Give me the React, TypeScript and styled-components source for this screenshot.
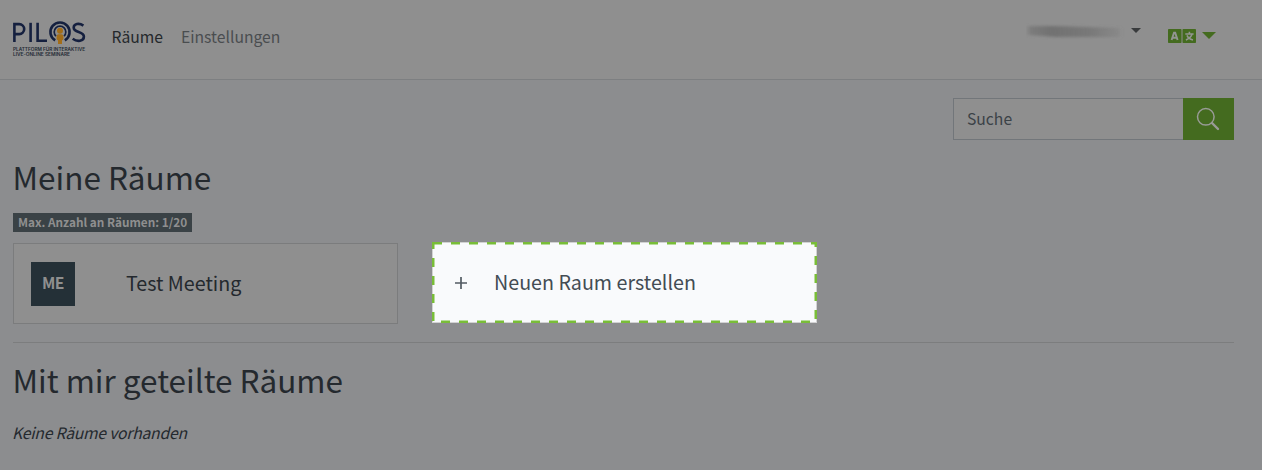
import React from 'react';
import styled, { createGlobalStyle } from 'styled-components';

const GlobalStyle = createGlobalStyle`
  *, *::before, *::after { box-sizing: border-box; }
  body {
    margin: 0;
    background: #8c8d8f;
    color: #24292e;
    font-family: 'Noto Sans CJK SC', 'Noto Sans', sans-serif;
    font-size: 15.7px;
    line-height: 24px;
  }
`;

const Page = styled.div`
  height: 470px;
  overflow: hidden;
`;

const Navbar = styled.header`
  display: flex;
  align-items: flex-start;
  height: 80px;
  padding: 0 46px 0 12px;
  background: #8f8f8f;
  border-bottom: 1px solid #7d7f81;
`;

const Logo = styled.svg`
  width: 75px;
  height: 40px;
  margin-top: 19px;
  flex: none;
`;

const NavLinks = styled.nav`
  display: flex;
  gap: 18px;
  margin: 25px auto 0 24.5px;
`;

const NavLink = styled.a<{ $active?: boolean }>`
  color: ${({ $active }) => ($active ? '#24282b' : '#4a4d4f')};
  white-space: nowrap;
`;

const UserMenu = styled.div`
  display: flex;
  align-items: flex-start;
  margin-right: 27px;
`;

const HiddenName = styled.svg`
  width: 100px;
  height: 22px;
  margin: 20px 5px 0 0;
`;

const Caret = styled.span<{ $color: string; $size: number; $top: number }>`
  border: ${({ $size }) => $size}px solid transparent;
  border-top-color: ${({ $color }) => $color};
  border-bottom: 0;
  margin-top: ${({ $top }) => $top}px;
`;

const LanguageMenu = styled.div`
  display: flex;
  align-items: flex-start;
  gap: 6px;
`;

const LanguageIcon = styled.svg`
  width: 28px;
  height: 14px;
  margin-top: 29px;
`;

const Content = styled.main`
  padding: 18px 28px 0 13px;
`;

const SearchBar = styled.form`
  display: flex;
  width: 281px;
  height: 42px;
  margin-left: auto;
`;

const SearchInput = styled.input`
  flex: 1;
  min-width: 0;
  padding: 0 13px;
  border: 1px solid #72767a;
  border-right: 0;
  border-radius: 0;
  background: #8f8f8f;
  font: inherit;
  color: #3b4247;
  outline: 0;
  &::placeholder { color: #3b4247; opacity: 1; }
`;

const SearchButton = styled.button`
  display: flex;
  align-items: center;
  justify-content: center;
  width: 51px;
  padding: 0 2px 0 0;
  border: 0;
  background: #446b1f;
`;

const Heading = styled.h2`
  margin: 15px 0 0 -0.5px;
  font-size: 31.5px;
  font-weight: 400;
  line-height: 42px;
  white-space: nowrap;
`;

const LimitBadge = styled.div`
  width: 179px;
  height: 19px;
  margin-top: 16px;
  padding-left: 5px;
  background: #3a4246;
  color: #8f8f8f;
  font-size: 11.8px;
  font-weight: 700;
  line-height: 18px;
  white-space: nowrap;
`;

const RoomGrid = styled.div`
  display: grid;
  grid-template-columns: 385px 385px;
  gap: 34px;
  height: 82px;
  margin-top: 10px;
`;

const RoomCard = styled.article`
  display: flex;
  align-items: center;
  height: 81px;
  margin-top: 1px;
  padding-left: 17px;
  border: 1px solid #7b7c7d;
  background: #8f8f8f;
`;

const RoomInitials = styled.div`
  width: 44px;
  height: 44px;
  margin-right: 51px;
  background: #243037;
  color: #8f8f8f;
  font-size: 15.7px;
  font-weight: 700;
  letter-spacing: -0.5px;
  line-height: 42px;
  text-align: center;
`;

const RoomName = styled.h3`
  margin: 0 0 2px;
  color: inherit;
  font-size: 19.7px;
  font-weight: 400;
  line-height: 28px;
  white-space: nowrap;
`;

const NewRoomCard = styled.button`
  position: relative;
  display: flex;
  align-items: center;
  height: 81px;
  padding: 0 0 0 23px;
  border: 0;
  background: #f9fafc;
  color: #434c54;
  font-family: inherit;
  text-align: left;
`;

const DashedFrame = styled.svg`
  position: absolute;
  inset: 0;
  width: 100%;
  height: 100%;
`;

const PlusIcon = styled.svg`
  width: 12px;
  height: 12px;
  margin-right: 27px;
`;

const Divider = styled.hr`
  height: 1px;
  margin: 18px 0 0;
  border: 0;
  background: #7c7d7e;
`;

const EmptyNote = styled.p`
  margin: 21px 0 0 -1px;
  font-style: italic;
  letter-spacing: -0.22px;
`;

function PilosLogo() {
  return (
    <Logo viewBox="0 0 75 40" aria-label="PILOS">
      <g fill="none" stroke="#15203f" strokeWidth="2.6">
        <path d="M2.4 23V5.1H7.2a5 5 0 0 1 0 10H2.4" />
        <path d="M18.6 3.8V23" />
        <path d="M25.6 3.8V21.7H35" />
        <path d="M71.4 6.6C67 3.6 61.7 4.8 61.7 8.7c0 5.2 10.2 3.4 10.2 8.9 0 4.7-6.5 5.6-11.2 2.1" />
        <path d="M43.2 21.4A9.6 9.6 0 1 1 52.8 21.4" strokeWidth="2.6" />
        <path d="M44 17.2A5.8 5.8 0 1 1 52 17.2" strokeWidth="1.7" />
      </g>
      <circle cx="48" cy="11.8" r="3" fill="#a36d18" />
      <path d="M44.6 17.2q0-2 2-2h2.8q2 0 2 2v3l-1.4 1.2V25h-4v-3.6l-1.4-1.2z" fill="#a36d18" />
      <g fill="#232a34" fontFamily="Inter, sans-serif" fontSize="4.4" fontWeight="600">
        <text x="1" y="31.5" textLength="72" lengthAdjust="spacingAndGlyphs">PLATTFORM FÜR INTERAKTIVE</text>
        <text x="1" y="36.8" textLength="57" lengthAdjust="spacingAndGlyphs">LIVE-ONLINE SEMINARE</text>
      </g>
    </Logo>
  );
}

function BlurredName() {
  return (
    <HiddenName viewBox="0 0 100 22" aria-hidden="true">
      <defs>
        <filter id="name-blur" x="-10%" y="-50%" width="120%" height="200%">
          <feGaussianBlur stdDeviation="2 1.5" />
        </filter>
        <linearGradient id="name-fade">
          <stop offset="0" stopColor="#6c6c6c" stopOpacity=".5" />
          <stop offset=".25" stopColor="#6c6c6c" stopOpacity=".85" />
          <stop offset=".65" stopColor="#6c6c6c" stopOpacity=".65" />
          <stop offset="1" stopColor="#6c6c6c" stopOpacity=".2" />
        </linearGradient>
      </defs>
      <path d="M2 6L28 6L94 8V17L30 17L2 15Z" fill="url(#name-fade)" filter="url(#name-blur)" />
    </HiddenName>
  );
}

export default function App() {
  return (
    <Page>
      <GlobalStyle />
      <Navbar>
        <PilosLogo />
        <NavLinks>
          <NavLink $active>Räume</NavLink>
          <NavLink>Einstellungen</NavLink>
        </NavLinks>
        <UserMenu>
          <BlurredName />
          <Caret $color="#393b3d" $size={5} $top={28} />
        </UserMenu>
        <LanguageMenu>
          <LanguageIcon viewBox="0 0 28 14" aria-label="Sprache">
            <rect width="13.5" height="14" rx=".8" fill="#446b1f" />
            <rect x="14.5" width="13.5" height="14" rx=".8" fill="#446b1f" />
            <g fill="none" stroke="#929591" strokeWidth="1.9">
              <path d="M3.6 11L6 3.6H7.2L9.6 11M4.7 8.7H8.5" />
              <path d="M17.3 5H25.6M21.4 2.8V5M24 5.3C23 8 20.8 9.9 17.9 11M19 6.4C20 9 22 10.3 25 11" strokeWidth="1.6" />
            </g>
          </LanguageIcon>
          <Caret $color="#446b1f" $size={7} $top={32} />
        </LanguageMenu>
      </Navbar>
      <Content>
        <SearchBar>
          <SearchInput placeholder="Suche" />
          <SearchButton type="button" aria-label="Suche">
            <svg width="24" height="24" viewBox="0 0 24 24" fill="none" stroke="#999b97">
              <circle cx="9.8" cy="9.8" r="8.3" strokeWidth="1.5" />
              <path d="M16 16L22 22" strokeWidth="2.4" strokeLinecap="round" />
            </svg>
          </SearchButton>
        </SearchBar>
        <Heading>Meine Räume</Heading>
        <LimitBadge>Max. Anzahl an Räumen: 1/20</LimitBadge>
        <RoomGrid>
          <RoomCard>
            <RoomInitials>ME</RoomInitials>
            <RoomName>Test Meeting</RoomName>
          </RoomCard>
          <NewRoomCard type="button">
            <DashedFrame viewBox="0 0 385 81" aria-hidden="true">
              <rect x=".5" y=".5" width="384" height="80" fill="none" stroke="#aaa" strokeDasharray="1 1" />
              <g stroke="#79bd38" strokeWidth="2.5" fill="none">
                <path d="M1 1.25H385" strokeDasharray="9 9" />
                <path d="M9 79.75H385" strokeDasharray="9 9" />
                <path d="M1.25 0V80" strokeDasharray="9 9" strokeDashoffset="2" />
                <path d="M383.75 0V80" strokeDasharray="9 9" strokeDashoffset="4" />
              </g>
            </DashedFrame>
            <PlusIcon viewBox="0 0 12 12" stroke="#535b63" strokeWidth="1.7">
              <path d="M6 0V12M0 6H12" />
            </PlusIcon>
            <RoomName>Neuen Raum erstellen</RoomName>
          </NewRoomCard>
        </RoomGrid>
        <Divider />
        <Heading>Mit mir geteilte Räume</Heading>
        <EmptyNote>Keine Räume vorhanden</EmptyNote>
      </Content>
    </Page>
  );
}
